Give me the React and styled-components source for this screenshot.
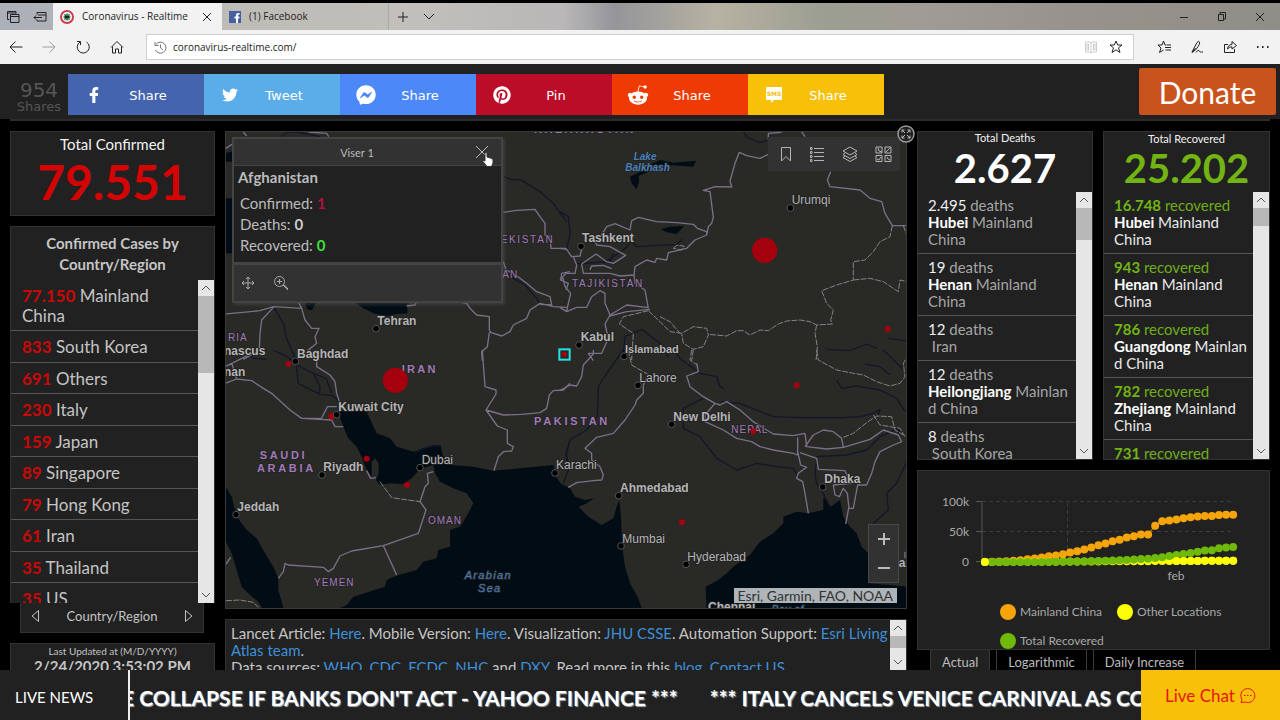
import React from "react";
import styled, { createGlobalStyle } from "styled-components";
import { FaFacebookF, FaTwitter, FaFacebookMessenger, FaPinterest, FaRedditAlien } from "react-icons/fa";

const ui = `"Open Sans", "Noto Sans", sans-serif`;
const dash = `Lato, "Open Sans", sans-serif`;

const Global = createGlobalStyle`
  * { box-sizing: border-box; }
  body { margin: 0; background: #000; overflow: hidden; }
  button { border: 0; padding: 0; background: none; color: inherit; font: inherit; cursor: pointer; }
  h1, h2, p, ul { margin: 0; padding: 0; font-weight: inherit; }
  ul { list-style: none; }
  svg { display: block; flex: none; }
  a { color: #3d8fd8; text-decoration: none; }
`;

/* ---------- browser chrome ---------- */

const Window = styled.div`
  height: 100vh;
  display: flex;
  flex-direction: column;
  padding-top: 3px;
  background: #000;
  font-family: ${dash};
`;

const TabStrip = styled.header`
  flex: none;
  display: flex;
  height: 27px;
  font: 10px/27px ${ui};
  color: #222;
  background: linear-gradient(90deg, #abafb8 0%, #bdbbb7 18%, #c3c0bc 30%, #b9b7b7 44%, #95959a 48%, #b7b2a2 56%, #9d9f92 64%, #9f9b95 72%, #97938c 84%, #8f8e86 100%);
`;

const TabTools = styled.div`
  width: 53px;
  display: flex;
  align-items: center;
  justify-content: space-between;
  padding: 0 6px;
`;

const Tab = styled.div`
  width: ${(p) => (p.$active ? 169 : 167)}px;
  display: flex;
  align-items: center;
  gap: 8px;
  padding: 0 9px 0 7px;
  background: ${(p) => (p.$active ? "#f2f2f2" : "rgba(190,189,183,.6)")};
  border-right: 1px solid ${(p) => (p.$active ? "#f2f2f2" : "#aaa9a6")};
`;

const TabName = styled.span`
  flex: 1;
  white-space: nowrap;
`;

const NewTabTools = styled.div`
  flex: 1;
  display: flex;
  align-items: center;
  gap: 14px;
  padding-left: 8px;
`;

const WindowButtons = styled.div`
  display: flex;
  align-items: center;
  gap: 28px;
  padding-right: 15px;
`;

const NavBar = styled.nav`
  flex: none;
  height: 34px;
  display: flex;
  align-items: center;
  padding-right: 10px;
  background: #f2f2f2;
  color: #222;
`;

const NavButtons = styled.div`
  width: 146px;
  display: flex;
  align-items: center;
  gap: 19px;
  padding-left: 9px;
`;

const AddressBox = styled.div`
  flex: 1;
  height: 26px;
  display: flex;
  align-items: center;
  gap: 6px;
  padding: 0 9px 0 7px;
  background: #fff;
  border: 1px solid #cfcfcf;
`;

const AddressInput = styled.input`
  flex: 1;
  min-width: 0;
  border: 0;
  outline: 0;
  padding: 0;
  background: none;
  color: #222;
  font: 10px/16px ${ui};
`;

const NavExtras = styled.div`
  display: flex;
  align-items: center;
  gap: 18px;
  padding-left: 23px;
`;

/* ---------- share bar ---------- */

const ShareBar = styled.section`
  flex: none;
  height: 55px;
  display: flex;
  align-items: center;
  padding: 0 4px 0 10px;
  background: #212121;
  font-family: "DejaVu Sans", Verdana, sans-serif;
`;

const ShareCount = styled.div`
  width: 58px;
  padding-top: 11px;
  text-align: center;
  color: #555;
  font-size: 13px;
  line-height: 14px;

  strong {
    display: block;
    font-weight: 400;
    font-size: 20px;
    line-height: 20px;
  }
`;

const ShareButtons = styled.div`
  flex: 1;
  display: flex;
  padding-top: 6px;
`;

const ShareButton = styled.button`
  width: 136px;
  height: 41px;
  display: flex;
  align-items: center;
  padding: 0 28px 0 16px;
  background: ${(p) => p.$color};
  color: #fff;
  font-size: 13px;

  span { flex: 1; padding: 1px 0 0 16px; text-align: center; }
`;

const IconSlot = styled.i`
  width: 20px;
  display: flex;
  justify-content: center;
`;

const Donate = styled.button`
  width: 137px;
  height: 47px;
  border-radius: 2px;
  background: #c9531c;
  color: #fff;
  font: 30px/46px ${dash};
`;

/* ---------- dashboard ---------- */

const Dashboard = styled.main`
  flex: 1;
  min-height: 0;
  display: grid;
  grid-template-columns: 205px minmax(0, 1fr) 353px;
  grid-template-rows: minmax(0, 1fr);
  gap: 10px;
  margin: 0 10px;
  padding-top: 10px;
  border-top: 2px solid #2c2c2c;
  color: #c4c4c4;
`;

const Column = styled.div`
  min-width: 0;
  min-height: 0;
  display: flex;
  flex-direction: column;
  gap: 10px;
`;

const Card = styled.section`
  background: #212121;
  border: 1px solid #323232;
  overflow: hidden;
`;

const TotalCard = styled(Card)`
  flex: none;
  height: 85px;
  padding-top: 2px;
  text-align: center;
`;

const TotalTitle = styled.h2`
  color: #f2f2f2;
  font-size: ${(p) => (p.$small ? 11 : 15)}px;
  line-height: ${(p) => (p.$small ? 12 : 20)}px;
`;

const BigNumber = styled.p`
  color: ${(p) => p.$color};
  font-weight: 700;
  font-size: ${(p) => p.$size || 48}px;
  line-height: ${(p) => p.$line || 56}px;
`;

const RegionPanel = styled.div`
  flex: 1;
  min-height: 0;
  display: flex;
  flex-direction: column;
`;

const RegionCard = styled(Card)`
  flex: 1;
  min-height: 0;
  display: flex;
  flex-direction: column;
  border-bottom: 0;

  h2 {
    height: 53px;
    flex: none;
    padding-top: 6px;
    text-align: center;
    font-weight: 700;
    font-size: 15px;
    line-height: 21px;
  }
`;

const Scroller = styled.div`
  flex: 1;
  min-height: 0;
  display: flex;
`;

const RegionList = styled.ul`
  flex: 1;
  min-height: 0;
  display: grid;
  grid-template-rows: 51px repeat(8, 1fr) 20px;
  overflow: hidden;
  font-size: 17px;
  line-height: 20px;

  li {
    min-height: 0;
    overflow: hidden;
    padding: 6px 20px 0 11px;
    border-bottom: 1px solid #555;
  }
  li:last-child { border: 0; }
  b { color: #c80808; }
`;

const Bar = styled.div`
  flex: none;
  width: 16px;
  display: flex;
  flex-direction: column;
  background: #e6e6e6;
  color: #555;

  button { height: 16px; display: flex; align-items: center; justify-content: center; }
`;

const Track = styled.div`
  flex: 1;
`;

const Thumb = styled.div`
  height: ${(p) => p.$size}px;
  background: #b8b8b8;
`;

const Switcher = styled.div`
  flex: none;
  height: 30px;
  display: flex;
  align-items: center;
  justify-content: space-between;
  margin: 0 11px 0 10px;
  padding: 0 9px 3px;
  background: #212121;
  border: 1px solid #323232;
  border-top: 0;
  font-size: 13px;
`;

const UpdatedCard = styled(Card)`
  flex: none;
  height: 27px;
  padding-top: 1px;
  text-align: center;
  border-bottom: 0;
  font-size: 10px;
  line-height: 13px;

  strong { display: block; font-size: 15px; line-height: 17px; }
`;

const MapCard = styled.section`
  position: relative;
  flex: 1;
  min-height: 0;
  border: 1px solid #3a3a3a;
  background: #292926;
`;

const MapSvg = styled.svg`
  width: 100%;
  height: 100%;
  font-family: "Liberation Sans", Arial, sans-serif;
`;

const Popup = styled.div`
  position: absolute;
  left: 6px;
  top: 5px;
  width: 271px;
  border: 2px solid #444;
  background: #323232;
  box-shadow: 2px 2px 3px rgba(90, 90, 90, 0.4);
  color: #bbb;
`;

const PopupHead = styled.header`
  height: 26px;
  display: flex;
  align-items: center;
  padding-right: 12px;
  font-size: 11px;

  span { flex: 1; padding-left: 5px; text-align: center; }
`;

const PopupBody = styled.div`
  height: 100px;
  padding: 2px 4px 0;
  background: #212121;
  border-top: 1px solid #444;
  border-bottom: 3px solid #444;
  font-size: 15px;
  line-height: 21px;

  h2 { font-weight: 700; font-size: 15px; line-height: 18px; padding-bottom: 7px; }
  p { padding-left: 2px; }
`;

const PopupTools = styled.footer`
  height: 36px;
  display: flex;
  align-items: center;
  gap: 18px;
  padding-left: 7px;
  color: #aaa;
`;

const Value = styled.b`
  color: ${(p) => p.$color};
`;

const Pointer = styled.svg`
  position: absolute;
  left: 256px;
  top: 19px;
`;

const MapToolbar = styled.div`
  position: absolute;
  top: 5px;
  right: 6px;
  width: 132px;
  height: 34px;
  display: flex;
  align-items: center;
  justify-content: space-around;
  padding-left: 3px;
  background: #323232;
  color: #b5b5b5;
`;

const ZoomBox = styled.div`
  position: absolute;
  right: 7px;
  bottom: 25px;
  width: 31px;
  height: 59px;
  display: flex;
  flex-direction: column;
  background: #323232;
  border: 1px solid #484848;
  color: #bbb;

  button { flex: 1; display: flex; align-items: center; justify-content: center; }
`;

const Attribution = styled.p`
  position: absolute;
  right: 9px;
  bottom: 5px;
  padding: 0 4px;
  background: #aeb4b8;
  color: #333;
  font-size: 14px;
  line-height: 15px;
`;

const ExpandButton = styled.button`
  position: absolute;
  top: -7px;
  right: -9px;
`;

const InfoCard = styled(Card)`
  flex: none;
  height: 51px;
  display: flex;
  border-bottom: 0;
  font-size: 15px;
  line-height: 17px;

  p { flex: 1; padding: 5px 0 0 5px; }
`;

const Stats = styled.div`
  flex: 1;
  min-height: 0;
  display: grid;
  grid-template-columns: 176px minmax(0, 1fr);
  grid-template-rows: minmax(0, 1fr);
  gap: 10px;
`;

const StatCard = styled(Card)`
  display: flex;
  flex-direction: column;
`;

const StatHead = styled.div`
  flex: none;
  height: 60px;
  padding-top: ${(p) => p.$top || 0}px;
  text-align: center;
`;

const StatList = styled.ul`
  flex: 1;
  min-width: 0;
  overflow: hidden;
  font-size: 15px;
  line-height: 17px;
  color: ${(p) => (p.$green ? "#e8e8e8" : "#a5a5a5")};

  li {
    padding: 5px 0 5px 10px;
    border-bottom: 1px solid #555;
    white-space: nowrap;
  }
  li > span { color: ${(p) => (p.$green ? "#6fae1a" : "#a5a5a5")}; }
  em { font-style: normal; font-weight: ${(p) => (p.$green ? 700 : 400)}; color: ${(p) => (p.$green ? "#72b414" : "#eee")}; }
  b { color: #fff; }
`;

const ChartPanel = styled.div`
  flex: none;
`;

const ChartCard = styled(Card)`
  height: 180px;
  font-size: 12px;
  color: #a8a8a8;

  svg { width: 100%; height: 126px; }
  text { fill: #a8a8a8; font-size: 12px; }
`;

const Legend = styled.ul`
  display: flex;
  flex-wrap: wrap;
  margin-left: 82px;

  li { display: flex; align-items: center; gap: 4px; width: 117px; height: 29px; white-space: nowrap; }
`;

const Swatch = styled.i`
  width: 16px;
  height: 16px;
  border-radius: 50%;
  background: ${(p) => p.$color};
`;

const ChartTabs = styled.div`
  display: flex;
  gap: 6px;
  padding-left: 13px;
`;

const ChartTab = styled.button`
  height: 20px;
  padding: 0 11px;
  border: solid #3a3a3a;
  border-width: 0 1px;
  background: ${(p) => (p.$active ? "#212121" : "#000")};
  color: #bbb;
  font-size: 13px;
  line-height: 24px;
`;

/* ---------- news footer ---------- */

const NewsBar = styled.footer`
  flex: none;
  height: 50px;
  display: flex;
  background: #212121;
  color: #fff;
`;

const NewsTitle = styled.h2`
  width: 130px;
  padding-left: 15px;
  border-right: 2px solid #eee;
  font-size: 15px;
  line-height: 55px;
`;

const Ticker = styled.div`
  flex: 1;
  min-width: 0;
  display: flex;
  gap: 32px;
  overflow: hidden;
  white-space: nowrap;
  font-weight: 700;
  font-size: 21px;
  line-height: 55px;
  text-shadow: 1px 1px 1px #aaa;

  span:first-child { margin-left: -8px; }
`;

const ChatButton = styled.button`
  width: 139px;
  display: flex;
  align-items: center;
  justify-content: center;
  gap: 4px;
  background: #f8c008;
  color: #e8150c;
  font-size: 17px;
`;

/* ---------- data ---------- */

const regions = [
  ["77.150", "Mainland China"], ["833", "South Korea"], ["691", "Others"], ["230", "Italy"], ["159", "Japan"],
  ["89", "Singapore"], ["79", "Hong Kong"], ["61", "Iran"], ["35", "Thailand"], ["35", "US"],
];

const deaths = [
  ["2.495", "Hubei", " Mainland", "China"],
  ["19", "Henan", " Mainland", "China"],
  ["12", "", "\u00a0Iran"],
  ["12", "Heilongjiang", " Mainlan", "d China"],
  ["8", "", "\u00a0South Korea"],
];

const recovered = [
  ["16.748", "Hubei", " Mainland", "China"],
  ["943", "Henan", " Mainland", "China"],
  ["786", "Guangdong", " Mainlan", "d China"],
  ["782", "Zhejiang", " Mainland", "China"],
  ["731", "", ""],
];

const china = [0.5, 0.6, 0.9, 1.4, 2, 2.8, 4.5, 6, 7.7, 9.7, 11, 13, 16, 18, 21, 24, 27.8, 31, 34.5, 37, 41, 43, 46, 46, 60.5, 68, 69, 71, 73, 74.5, 76, 76.5, 76.7, 78.5, 78.7, 78.7];
const healed = [0, 0, 0, 0, 0, 0, 0, 0, 0, 0, 0.3, 0.4, 0.5, 0.6, 1, 1.3, 1.6, 2, 2.5, 3, 3.5, 4, 4.8, 5.5, 6.8, 8, 10, 11.5, 13.5, 15, 17, 19, 19.5, 23, 24, 25.2];
const others = china.map((_, i) => i / 16);

/* ---------- small drawings ---------- */

const Line = ({ w = 16, h = w, box = `0 0 ${w} ${h}`, sw = 1, children, ...rest }) => (
  <svg width={w} height={h} viewBox={box} fill="none" stroke="currentColor" strokeWidth={sw} aria-hidden="true" {...rest}>
    {children}
  </svg>
);

const Chevron = ({ up }) => (
  <Line w={10} h={6}><path d={up ? "M1 5l4-4 4 4" : "M1 1l4 4 4-4"} /></Line>
);

const ScrollBar = ({ thumb }) => (
  <Bar>
    <button aria-label="Scroll up"><Chevron up /></button>
    <Track><Thumb $size={thumb} /></Track>
    <button aria-label="Scroll down"><Chevron /></button>
  </Bar>
);

const SmsIcon = () => (
  <svg width="18" height="18" viewBox="0 0 18 18" aria-hidden="true">
    <path d="M2 1h14q1 0 1 1v11q0 1-1 1h-7l-3 3v-3H2q-1 0-1-1V2q0-1 1-1z" fill="#fff" />
    <text x="9" y="10" textAnchor="middle" fontFamily="DejaVu Sans, sans-serif" fontWeight="700" fontStyle="normal" fontSize="6" fill="#f8c008">SMS</text>
  </svg>
);

const shares = [
  ["#4464ae", "Share", <FaFacebookF size={16} />],
  ["#5bade9", "Tweet", <FaTwitter size={16} />],
  ["#4c88f7", "Share", <FaFacebookMessenger size={20} />],
  ["#bb0c28", "Pin", <FaPinterest size={18} />],
  ["#f03a04", "Share", <FaRedditAlien size={22} />],
  ["#f8c008", "Share", <SmsIcon />],
];

/* ---------- map ---------- */

const sea = "#010c15";

const sectors = [
  {
    at: "0 0",
    water: [
      "M395 540H562V580L530 582 500 588 460 580 430 565z",
      "M255 548H288L276 570 262 568z",
      "M15 235H42V400H15z",
      "M15 100L44 92V125H15z",
    ],
    rivers: [
      "M160 560L190 610 200 655 225 715", "M850 170L880 180 900 178 960 215 1000 250 1040 305",
      "M850 455L880 475 915 495 950 535 960 550", "M185 50Q200 30 240 38L300 50", "M75 690L100 715 140 718",
    ],
    borders: [
      "M850 277L890 271 945 268 960 290 975 310V345L990 350 993 385H1040", "M850 425L858 450 880 460 920 490 950 515 990 530 995 555 960 553",
      "M15 582L60 578 120 572 160 560 200 562 245 565 235 546", "M160 562L125 600 120 640 118 690 70 718", "M245 565L255 600 275 625 297 625 285 650 290 670 265 690 285 720",
      "M710 545L740 550 750 565 770 585 808 590V630L812 637 845 648 870 635 880 615 920 595 930 570 960 550 1000 560 1040 562",
      "M808 637L802 680 785 695 787 722", "M1050 455L1025 460 1022 480 1045 490 1038 510", "M18 85L40 70", "M265 36L320 40 326 50", "M70 36L80 48", "M560 558L585 555 588 548",
    ],
    provinces: [],
  },
  {
    at: "1020 0",
    water: ["M210 170L235 158 262 138 300 120 340 128 375 125 408 122 400 140 370 138 340 136 300 140 236 168 237 185 230 208 215 190z", "M303 328L330 320 372 318 350 342 320 337z"],
    rivers: [
      "M0 275L25 290 31 340 20 385", "M220 370L230 380 350 373 367 358", "M190 700L195 650 245 628 300 670 326 712", "M550 35L562 52 598 68 625 60",
      "M800 688L870 692 920 672 950 685", "M985 655L1040 663", "M160 400L150 425 45 432", "M130 430L190 390 210 370",
    ],
    borders: [
      "M0 385L20 388 35 410 60 408 65 388", "M120 352L140 320 165 311 210 330 215 302 235 292 290 305 350 308 400 313 412 325 440 335 440 345 405 360 380 385 325 398 320 420 290 415 285 427 260 420 225 440 222 465 180 468 150 460H70L65 432 108 402 140 425 160 430 197 406 150 380 110 375 100 352",
      "M440 345L445 320 455 310 460 292 450 215 430 211 465 200 515 201 510 183 525 130 538 97 560 107 600 115 625 103",
      "M625 60V40L665 37M725 35L735 50", "M812 155L802 180 810 200 900 210 930 235 965 245 975 280 997 317H1042",
      "M0 562L20 575 50 562 80 562 95 530 120 512 135 520V550L150 585 200 555 265 563", "M150 585L135 612 145 655 125 700H85L100 722", "M150 588L200 575 270 568",
      "M222 465L225 490 255 510 265 565", "M0 480L18 460H45L50 435 40 410", "M8 470L15 500 32 520 20 572", "M90 450L95 438 130 436 155 446",
    ],
    provinces: [
      "M997 317L990 350 960 365 940 395 915 420 880 425 880 480 830 495 785 512 800 550 820 570 812 600 817 612 770 615 750 605 720 600 680 603 655 612 625 632 600 630 570 645 550 632 530 632 500 648 445 643",
      "M880 480L930 475 970 485 1015 515 1020 480 1042 485", "M770 615L765 640 772 680 768 722", "M265 572L300 605 330 635 365 640 400 620 440 625 445 645 430 680 400 688 370 670 365 640", "M400 688L395 722",
      "M300 590L330 605 360 640", "M265 572L190 590 178 612 220 640 215 720", "M1030 317L1042 350", "M340 385L350 376 372 378 365 390z",
    ],
  },
  {
    at: "0 690",
    water: [
      "M355 188L395 172 440 186 470 250 510 265 530 290 580 305 640 285 662 286 668 315 690 345 760 350 820 362 900 355 1000 345 1005 375 1025 405V780H345L380 765 400 740 495 710 500 690 535 675 590 660 610 635 650 625 655 600 690 590V540L720 530 745 490 760 460 740 430 700 415 660 395 645 370 640 345 622 350 600 357 575 385 550 402 510 400 480 405 468 390 476 370V340L465 325 455 335V380L440 360 425 320 410 290 385 265 370 230z",
      "M10 400L35 440 50 500 80 540 110 565 135 610 160 650 175 685V720L192 780H130L115 755 90 735 65 710 50 660 35 610 10 560z",
    ],
    rivers: ["M160 0L200 20 228 40 235 100 300 133 340 137 358 155", "M225 42L280 70 318 85 335 130", "M280 70L300 110 298 133", "M585 308Q620 285 660 288", "M1050 270L1038 310 1042 350"],
    borders: [
      "M787 0L795 110 828 120V132L798 180 832 228 862 240V280L880 290 875 303 850 305 835 320 822 362", "M798 180L850 195 905 193 960 188 980 175 988 135 1000 122 1030 120 1050 100",
      "M15 100L50 87 95 92 130 115 155 130 210 180 245 205H305L322 170H350", "M245 205L335 210 345 230H370", "M290 0V50L330 75 345 95 350 130 358 155", "M15 50L100 8M35 38L50 87",
      "M175 685L190 665 195 640 205 645 310 652 325 665 340 655 360 618 395 603 490 587 595 550 618 480 600 455 615 410 625 400 622 370 640 365", "M490 587L530 675", "M18 642L32 622", "M440 362L452 385 468 383",
    ],
    provinces: ["M480 395L515 443 600 455", "M18 752L60 750 100 757 115 772"],
  },
  {
    at: "1020 690",
    water: [
      "M0 400L30 415 45 440 75 450 102 445 75 463 55 470 85 500 125 525 160 505 170 470 178 450 183 500 185 560 188 600 195 650 210 700 235 745 247 780H0z",
      "M440 780L437 710 475 690 500 670 520 650 570 615 600 575 640 550 670 520V500L710 485 745 490 790 480 790 440 812 470 840 450 850 500 870 530 890 550 905 590 925 610V700L1045 710V780z",
    ],
    rivers: [
      "M190 0L140 70 115 110 112 200 80 240 30 270 20 310 25 360 10 400", "M430 145L370 175V235L420 260 470 325 530 360 590 340 650 350 700 355 715 380", "M485 155L540 160 640 200 720 203 850 203 900 200 940 190 960 178 955 195",
      "M770 320L860 315 920 300 960 260 1015 235 1020 262", "M770 330L765 370 770 400 790 430 810 470", "M830 90L845 115 890 108 960 120 1010 145 1035 185",
      "M340 0L365 30 420 70 470 80 480 110 492 116", "M915 42L960 50 990 75", "M1040 335L1010 400 980 430 985 480 940 520", "M970 0L1010 40 1040 65",
    ],
    borders: [
      "M0 122L30 105 50 108 65 80 70 45 100 12V0", "M265 75L250 105V130L230 150 225 165 195 210 160 250 110 262 75 295 95 310V330L120 350 130 375 125 390 100 392 50 398 25 412",
      "M410 40L415 65 380 78 390 110 430 140 465 160 435 195 435 215 490 240 530 265 575 275 600 290 640 300 700 310 713 315V262", "M465 160L480 165 500 155 540 180 580 215 620 240 640 252 700 257 735 250",
      "M735 290L760 255 790 240 820 245 845 265 850 292 800 297 740 290 735 250", "M712 300L722 345 740 352 715 370 710 385 728 395 735 430 745 490", "M720 308L770 325 775 358 855 362 873 400 820 405 825 435 838 440 850 415 862 430 867 475 880 475 893 405H920L935 370 945 335 960 305 1000 285 1025 275 1015 255 970 240 930 268 850 292", "M867 470L857 522",
      "M1042 380V410", "M1035 605V625",
    ],
    provinces: [
      "M770 0L775 30 830 60 870 68 910 75 950 95 990 108 1020 100 1035 80 1030 40 1042 20", "M395 0L390 30 412 45M205 0L215 45 262 72",
      "M850 262L880 250 920 218 950 198 995 200 1005 240 1030 255", "M940 195L960 225 1020 235 1035 260",
    ],
  },
];

const purple = "#a07ab8";
const blue = "#4a80b8";

/* x, y, text, size, weight, dot x, dot y */
const cities = [
  [472, 615, "Tehran", 36, 700, 468, 626], [231, 713, "Baghdad", 36, 700, 226, 724], [1086, 365, "Tashkent", 36, 700, 1083, 379],
  [1715, 252, "Urumqi", 36, 400, 1711, 264], [1082, 664, "Kabul", 36, 700, 1077, 675], [1215, 699, "Islamabad", 33, 700, 1212, 709],
  [1258, 785, "Lahore", 36, 400, 1254, 796], [355, 873, "Kuwait City", 36, 700, 350, 884], [1360, 902, "New Delhi", 36, 700, 1355, 913],
  [310, 1054, "Riyadh", 36, 700, 306, 1065], [605, 1032, "Dubai", 36, 400, 600, 1043], [1008, 1048, "Karachi", 36, 400, 1005, 1059],
  [1200, 1117, "Ahmedabad", 36, 700, 1196, 1127], [1813, 1090, "Dhaka", 36, 700, 1808, 1101], [52, 1173, "Jeddah", 36, 700, 48, 1184],
  [1207, 1268, "Mumbai", 36, 400, 1203, 1278], [1402, 1323, "Hyderabad", 36, 400, 1398, 1333], [1464, 1473, "Chennai", 36, 700],
  [12, 705, "nascus", 36, 700], [12, 769, "nan", 36, 700], [2036, 1340, "ar", 36, 700],
];

const countries = [
  [24, 663, "RIA", 30, 400, 3], [842, 370, "EKISTAN", 30, 400, 5], [847, 473, "AN", 30, 400, 3], [1056, 500, "TAJIKISTAN", 30, 400, 5],
  [545, 758, "IRAN", 33, 700, 7], [942, 915, "PAKISTAN", 33, 700, 8], [119, 1017, "SAUDI", 33, 700, 8], [111, 1055, "ARABIA", 33, 700, 8],
  [624, 1213, "OMAN", 30, 400, 3], [282, 1397, "YEMEN", 30, 400, 3], [1534, 938, "NEPAL", 30, 400, 3], [942, 40, "KAZAKHSTAN", 33, 700, 8],
];

const seas = [
  [1241, 119, "Lake", 30, 700, 0], [1216, 153, "Balkhash", 30, 700, 0], [734, 1376, "Arabian", 33, 400, 4], [774, 1415, "Sea", 33, 400, 4],
  [1655, 1480, "Bay of", 30, 400, 2],
];

const outbreaks = [
  [526, 781, 38], [1634, 391, 38], [2003, 627, 9], [205, 732, 9], [335, 889, 10], [440, 1016, 9], [561, 1095, 9],
  [1730, 796, 9], [1600, 934, 9], [1386, 1207, 9], [1033, 703, 8],
];

const WorldMap = () => (
  <MapSvg viewBox="18 36 2040 1428" preserveAspectRatio="xMidYMid slice" role="img" aria-label="Outbreak map">
    {sectors.map((s) => (
      <g key={s.at} transform={`translate(${s.at})`} fill="none" strokeLinejoin="round">
        <path d={s.water.join("")} fill={sea} />
        <path d={s.rivers.join("")} stroke="#131729" strokeWidth="4" />
        <path d={s.borders.join("")} stroke="#7b7089" strokeWidth="4" />
        <path d={s.provinces.join("")} stroke="#858382" strokeWidth="3" strokeDasharray="18 4" />
      </g>
    ))}
    <g stroke="#242424" strokeWidth="5" paintOrder="stroke">
      {countries.map(([x, y, t, size, weight, gap]) => (
        <text key={t} x={x} y={y} fill={purple} fontSize={size} fontWeight={weight} style={{ letterSpacing: gap }}>{t}</text>
      ))}
      {seas.map(([x, y, t, size, weight, gap]) => (
        <text key={t} x={x} y={y} fill={blue} fontSize={size} fontWeight={weight} fontStyle="italic" style={{ letterSpacing: gap }}>{t}</text>
      ))}
    </g>
    {outbreaks.map(([x, y, r]) => <circle key={x} cx={x} cy={y} r={r} fill="#a5000e" />)}
    <rect x="1018" y="688" width="31" height="31" fill="none" stroke="#22e3e3" strokeWidth="6" />
    {cities.map(([x, y, t, size, weight, dx, dy]) => (
      <g key={t}>
        {dx && <circle cx={dx} cy={dy} r="10" fill="#000" stroke="#555" strokeWidth="3" />}
        <text x={x} y={y} fill="#b4b4b4" stroke="#222" strokeWidth="5" paintOrder="stroke" fontSize={size} fontWeight={weight}>{t}</text>
      </g>
    ))}
  </MapSvg>
);

const px = (i) => 67 + i * 7.09;
const py = (v) => 91 - v * 0.6;

const Series = ({ data, color }) => (
  <g fill={color}>
    <polyline points={data.map((v, i) => `${px(i)},${py(v)}`).join(" ")} fill="none" stroke={color} />
    {data.map((v, i) => <circle key={i} cx={px(i)} cy={py(v)} r="4" />)}
  </g>
);

const Chart = () => (
  <svg viewBox="0 0 351 126" preserveAspectRatio="xMinYMin meet" role="img" aria-label="Cases over time">
    <g stroke="#3c3c3c" strokeDasharray="4 3"><path d="M64 30.5H315M64 60.5H315M149.500 32V95" /></g>
    <path d="M58 30.500h6V90.500h-6M58 60.500h6" fill="none" stroke="#555" />
    <text x="51" y="35" textAnchor="end">100k</text>
    <text x="51" y="65" textAnchor="end">50k</text>
    <text x="51" y="95" textAnchor="end">0</text>
    <text x="258" y="109" textAnchor="middle">feb</text>
    <Series data={china} color="#f5a50a" />
    <Series data={others} color="#fdfd05" />
    <Series data={healed} color="#70b80a" />
    <g fill="#fdfd05">
      <circle cx={px(0)} cy={py(0)} r="4" />
      {others.map((v, i) => i > 26 && <circle key={i} cx={px(i)} cy={py(v)} r="4" />)}
    </g>
  </svg>
);

const StatRows = ({ rows, word, green }) => (
  <StatList $green={green}>
    {rows.map(([n, place, rest, tail]) => (
      <li key={n + place + rest}>
        <span><em>{n}</em> {word}</span><br />
        {place && <b>{place}</b>}{rest}
        {tail && <><br />{tail}</>}
      </li>
    ))}
  </StatList>
);

export default function App() {
  return (
    <Window>
      <Global />
      <TabStrip>
        <TabTools>
          <button aria-label="Show set-aside tabs">
            <Line w={14}><path d="M3.500 9.500H1.500V1.500H10V3.500M1.500 3H10" /><path d="M4.500 4.500h8.500v8h-8.500zM4.500 6.500H13" /></Line>
          </button>
          <button aria-label="Set tabs aside">
            <Line w={14}><path d="M4 4.500V2.500H13V11H4V9.500M5 5h8M1 7.500H9M3 5.500l-2 2 2 2" /></Line>
          </button>
        </TabTools>
        <Tab $active>
          <svg width="14" height="14" viewBox="0 0 14 14" aria-hidden="true">
            <circle cx="7" cy="7" r="6" fill="#fff" stroke="#cf3b4b" strokeWidth="2" />
            <path d="M7 3v8M3 7h8M4 4l6 6M10 4l-6 6" stroke="#2fa37c" />
            <circle cx="7" cy="7" r="3" fill="#3d7b5e" /><path d="M5 7h4" stroke="#222" strokeWidth="2" />
          </svg>
          <TabName>Coronavirus - Realtime</TabName>
          <button aria-label="Close tab"><Line w={10}><path d="M1 1l8 8M9 1L1 9" /></Line></button>
        </Tab>
        <Tab>
          <svg width="12" height="12" viewBox="0 0 12 12" aria-hidden="true">
            <path d="M0 0H12V12H0z" fill="#4660a0" />
            <path d="M7 12V7.500H5.500V5.500H7V4Q7 2 9 2H10.500V3.800H9.500Q9 3.800 9 4.400V5.500H10.500L10.200 7.500H9V12z" fill="#fff" />
          </svg>
          <TabName>(1) Facebook</TabName>
        </Tab>
        <NewTabTools>
          <button aria-label="New tab"><Line w={12}><path d="M6 1v10M1 6h10" /></Line></button>
          <button aria-label="Tab previews"><Line w={12} h={7}><path d="M1 1l5 5 5-5" /></Line></button>
        </NewTabTools>
        <WindowButtons>
          <button aria-label="Minimize"><Line w={10}><path d="M1 5.500h8" /></Line></button>
          <button aria-label="Restore"><Line w={10}><path d="M1.500 2.500h5v6h-5zM3 2V.500h5.500V7H7" /></Line></button>
          <button aria-label="Close"><Line w={10}><path d="M1 1l8 8M9 1L1 9" /></Line></button>
        </WindowButtons>
      </TabStrip>

      <NavBar>
        <NavButtons>
          <button aria-label="Back"><Line w={14}><path d="M13.500 7H1M6.500 1.500L1 7l5.500 5.500" /></Line></button>
          <button aria-label="Forward"><Line w={14} opacity=".4"><path d="M.500 7H13M7.500 1.500L13 7l-5.500 5.500" /></Line></button>
          <button aria-label="Refresh"><Line w={16}><path d="M5 3A6 6 0 1 0 11.500 3M2 2.500h3.500V6" /></Line></button>
          <button aria-label="Home"><Line w={14}><path d="M1 7.500L7 1.500l6 6M2.500 6.500V13H5.500V9h3v4h3V6.500" /></Line></button>
        </NavButtons>
        <AddressBox>
          <Line w={13} color="#777"><path d="M2 3.500A5.500 5.500 0 1 1 1.500 9M1 1v3.500h3.500M6.500 3.500V7l2.500 2" /></Line>
          <AddressInput aria-label="Address" defaultValue="coronavirus-realtime.com/" />
          <Line w={14} color="#ccc"><path d="M1.500 2H6l1 1 1-1h4.500v10H8l-1 1-1-1H1.500zM7 3v9M3 4h1.500v6H3zM9.500 4H11v6H9.500z" /></Line>
          <button aria-label="Add to favorites">
            <Line w={20} h={14} box="-5 0 20 14"><path d="M7 1l1.700 4H13L9.500 7.800 11 12.500 7 9.800 3 12.500 4.500 7.800 1 5h4.300z" /></Line>
          </button>
        </AddressBox>
        <NavExtras>
          <button aria-label="Favorites"><Line w={15} h={14}><path d="M9.500 5H8L6.500 1 5 5H1l3 3-1.500 4.500L6.500 10M8 7.500h6M8.500 10H14M10 5h4" /></Line></button>
          <button aria-label="Notes"><Line w={15} h={14}><path d="M2 12L7 2.500Q8.500.500 9.500 2T6 9.500L2 12.500 5.500 8M6 12.500Q8.500 9 9 10.500T10.500 12 13 12" /></Line></button>
          <button aria-label="Share"><Line w={15} h={14}><path d="M5 4.500H1.500v8h10V9M4.500 9Q5 4.500 9 4.500V1.500L13.500 5.500 9 9V6.800Q6 6.800 4.500 9" /></Line></button>
          <button aria-label="More"><Line w={14} h={14} sw={2}><path d="M1 7h1.500M6 7h1.500M11 7h1.500" /></Line></button>
        </NavExtras>
      </NavBar>

      <ShareBar>
        <ShareCount><strong>954</strong>Shares</ShareCount>
        <ShareButtons>
          {shares.map(([color, label, icon]) => (
            <ShareButton key={color} $color={color}><IconSlot>{icon}</IconSlot><span>{label}</span></ShareButton>
          ))}
        </ShareButtons>
        <Donate>Donate</Donate>
      </ShareBar>

      <Dashboard>
        <Column>
          <TotalCard>
            <TotalTitle>Total Confirmed</TotalTitle>
            <BigNumber $color="#d40404">79.551</BigNumber>
          </TotalCard>
          <RegionPanel>
            <RegionCard>
              <h2>Confirmed Cases by<br />Country/Region</h2>
              <Scroller>
                <RegionList>
                  {regions.map(([n, name]) => <li key={name}><b>{n}</b> {name}</li>)}
                </RegionList>
                <ScrollBar thumb={77} />
              </Scroller>
            </RegionCard>
            <Switcher>
              <button aria-label="Previous"><Line w={10} h={14}><path d="M8.500 1.500v11L2 7z" /></Line></button>
              Country/Region
              <button aria-label="Next"><Line w={10} h={14}><path d="M1.500 1.500v11L8 7z" /></Line></button>
            </Switcher>
          </RegionPanel>
          <UpdatedCard>Last Updated at (M/D/YYYY)<strong>2/24/2020 3:53:02 PM</strong></UpdatedCard>
        </Column>

        <Column>
          <MapCard>
            <WorldMap />
            <Popup>
              <PopupHead>
                <span>Viser 1</span>
                <button aria-label="Close popup"><Line w={14}><path d="M1 1l12 12M13 1L1 13" /></Line></button>
              </PopupHead>
              <PopupBody>
                <h2>Afghanistan</h2>
                <p>Confirmed: <Value $color="#b0123c">1</Value></p>
                <p>Deaths: <Value $color="#ccc">0</Value></p>
                <p>Recovered: <Value $color="#3ce03c">0</Value></p>
              </PopupBody>
              <PopupTools>
                <button aria-label="Pan to"><Line w={14}><path d="M7 1v12M1 7h12M5 3l2-2 2 2M5 11l2 2 2-2M3 5L1 7l2 2M11 5l2 2-2 2" /></Line></button>
                <button aria-label="Zoom to"><Line w={16}><circle cx="6.500" cy="6.500" r="5" /><path d="M6.500 4v5M4 6.500h5M10 10l4.500 4.500M11 9.500l4 4.500-1 1" /></Line></button>
              </PopupTools>
            </Popup>
            <Pointer width="12" height="16" viewBox="0 0 12 16" aria-hidden="true">
              <path d="M3 2Q3.800.500 5 2V6l5 1.500q1 .500 1 1.500v3l-1.500 3.500H5L1 10.500Q1 8.500 3 10z" fill="#fff" stroke="#333" />
            </Pointer>
            <MapToolbar>
              <button aria-label="Bookmarks"><Line w={12} h={16}><path d="M1.500 1.500h9V15L6 10.500 1.500 15z" /></Line></button>
              <button aria-label="Legend"><Line w={16}><path d="M5 2.500h10M5 6.500h10M5 10.500h10M5 14.500h10M1.500 1.500h1.500v2H1.500zM1.500 5.500h1.500v2H1.500zM1.500 9.500h1.500v2H1.500zM1.500 13.500h1.500v2H1.500z" /></Line></button>
              <button aria-label="Layers"><Line w={16}><path d="M8 1l7 4-7 4-7-4zM3 7L1 8.500l7 4 7-4L13 7M3 10L1 11.500l7 4 7-4L13 10" /></Line></button>
              <button aria-label="Basemaps"><Line w={17} h={16}><path d="M1 1h6v6H1zM10 1h6v6h-6zM1 9.500h6v6H1zM10 9.500h6v6h-6zM3 2l1 3 3 1M11 6l4-4M2 13l2 1 2-3M12 11l1 2 2 1" /></Line></button>
            </MapToolbar>
            <ZoomBox>
              <button aria-label="Zoom in"><Line w={14} sw={2}><path d="M7 1v12M1 7h12" /></Line></button>
              <button aria-label="Zoom out"><Line w={14} sw={2}><path d="M1 7h12" /></Line></button>
            </ZoomBox>
            <Attribution>Esri, Garmin, FAO, NOAA</Attribution>
            <ExpandButton aria-label="Expand map">
              <Line w={18} color="#bbb"><circle cx="9" cy="9" r="8" fill="#222" stroke="#999" strokeWidth="1.500" /><path d="M5 7.500V5h2.500M5 5l3 3M10.500 5H13v2.500M13 5l-3 3M5 10.500V13h2.500M5 13l3-3M10.500 13H13v-2.500M13 13l-3-3" /></Line>
            </ExpandButton>
          </MapCard>
          <InfoCard>
            <p>
              Lancet Article: <a href="#lancet">Here</a>. Mobile Version: <a href="#mobile">Here</a>. Visualization: <a href="#jhu">JHU CSSE</a>. Automation Support: <a href="#esri">Esri Living Atlas team</a>.<br />
              Data sources: <a href="#who">WHO</a>, <a href="#cdc">CDC</a>, <a href="#ecdc">ECDC</a>, <a href="#nhc">NHC</a> and <a href="#dxy">DXY</a>. Read more in this <a href="#blog">blog</a>. <a href="#contact">Contact US</a>.
            </p>
            <ScrollBar thumb={12} />
          </InfoCard>
        </Column>

        <Column>
          <Stats>
            <StatCard>
              <StatHead>
                <TotalTitle $small>Total Deaths</TotalTitle>
                <BigNumber $color="#fff" $size={40} $line={48}>2.627</BigNumber>
              </StatHead>
              <Scroller><StatRows rows={deaths} word="deaths" /><ScrollBar thumb={32} /></Scroller>
            </StatCard>
            <StatCard>
              <StatHead $top={1}>
                <TotalTitle $small>Total Recovered</TotalTitle>
                <BigNumber $color="#72b414" $size={40} $line={46}>25.202</BigNumber>
              </StatHead>
              <Scroller><StatRows rows={recovered} word="recovered" green /><ScrollBar thumb={18} /></Scroller>
            </StatCard>
          </Stats>
          <ChartPanel>
            <ChartCard>
              <Chart />
              <Legend>
                <li><Swatch $color="#f5a50a" />Mainland China</li>
                <li><Swatch $color="#fdfd05" />Other Locations</li>
                <li><Swatch $color="#70b80a" />Total Recovered</li>
              </Legend>
            </ChartCard>
            <ChartTabs>
              <ChartTab $active>Actual</ChartTab>
              <ChartTab>Logarithmic</ChartTab>
              <ChartTab>Daily Increase</ChartTab>
            </ChartTabs>
          </ChartPanel>
        </Column>
      </Dashboard>

      <NewsBar>
        <NewsTitle>LIVE NEWS</NewsTitle>
        <Ticker>
          <span>E COLLAPSE IF BANKS DON'T ACT - YAHOO FINANCE ***</span>
          <span>*** ITALY CANCELS VENICE CARNIVAL AS CORONAVIRUS SPREADS ***</span>
        </Ticker>
        <ChatButton>
          Live Chat
          <Line w={17}><path d="M2 15.500L3 12.500A7 7 0 1 1 6 15zM5 8.500h1.500M8 8.500h1.500M11 8.500h1.500" /></Line>
        </ChatButton>
      </NewsBar>
    </Window>
  );
}
